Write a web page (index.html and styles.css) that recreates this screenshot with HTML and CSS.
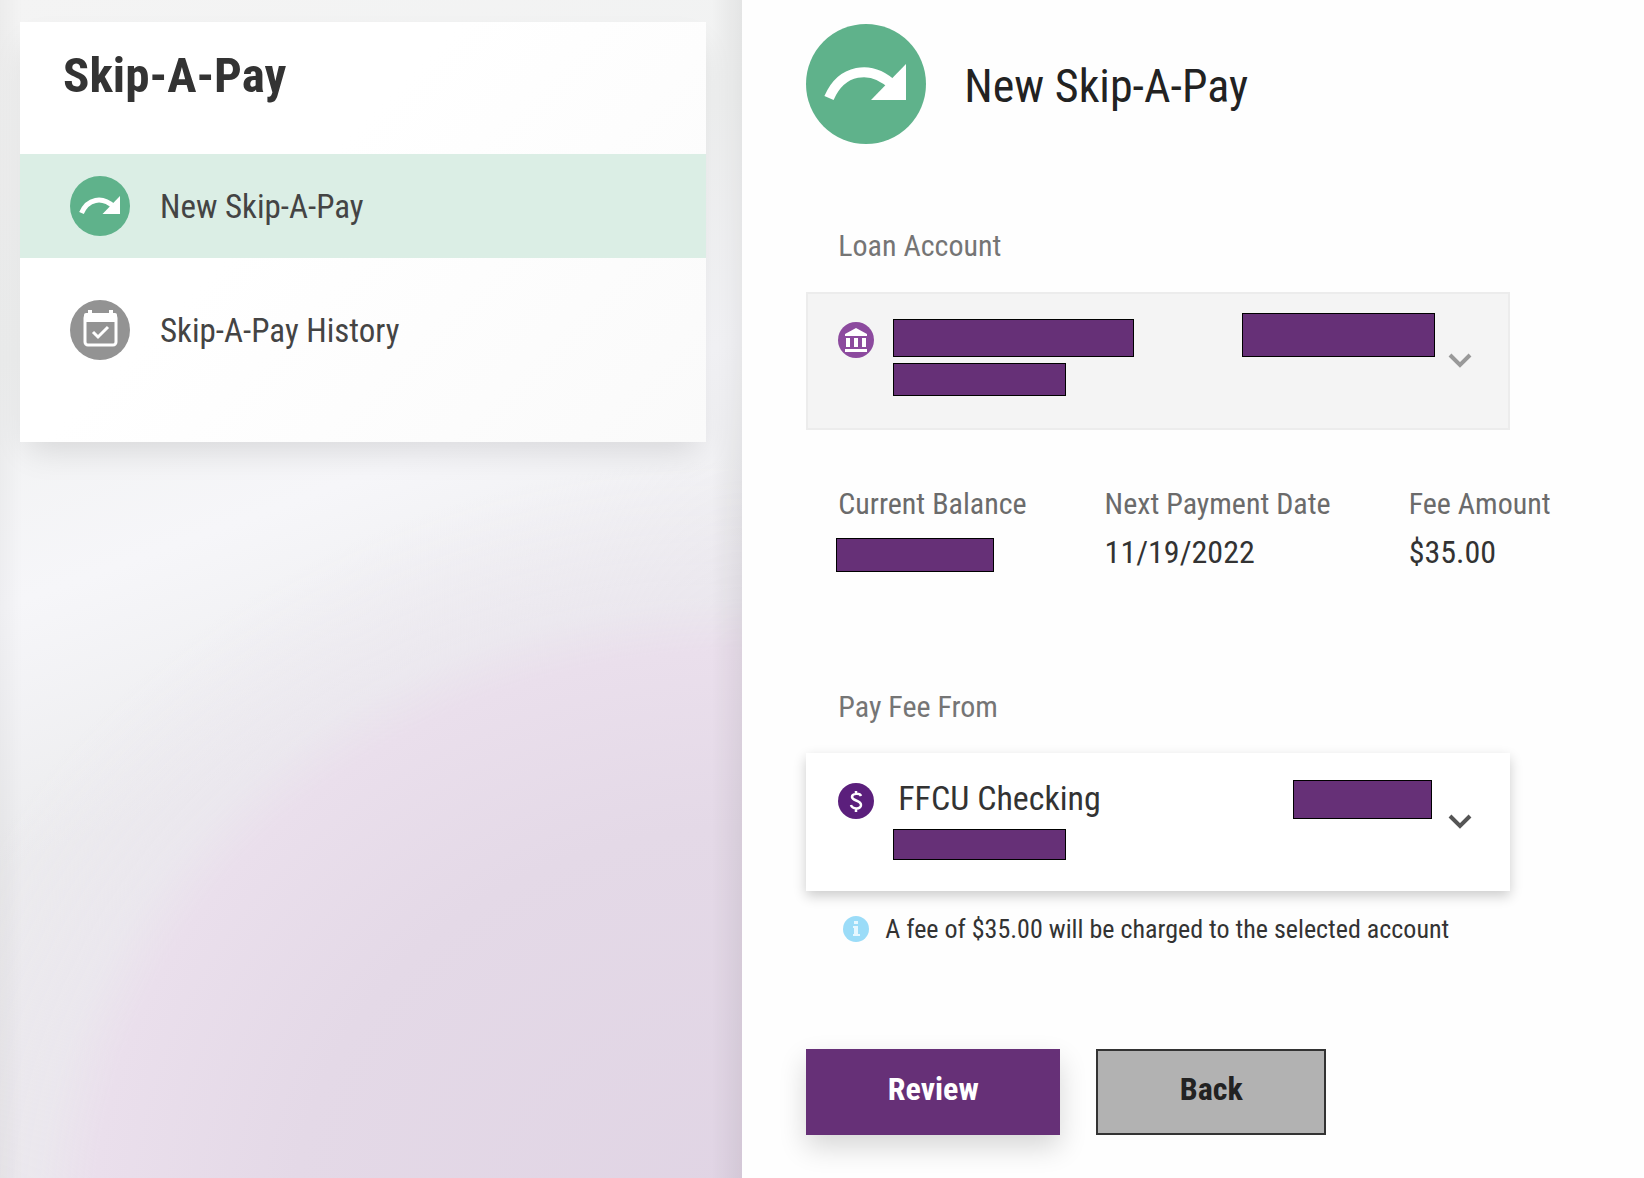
FILE: index.html
```html
<!DOCTYPE html>
<html lang="en">
<head>
  <meta charset="UTF-8" />
  <meta name="viewport" content="width=device-width, initial-scale=1.0"/>
  <title>Skip-A-Pay</title>
  <link rel="stylesheet" href="styles.css">
</head>
<body>
  <!-- shared icon shapes -->
  <svg width="0" height="0" class="icon-defs" aria-hidden="true">
    <symbol id="skip" viewBox="0 0 120 120">
      <circle cx="60" cy="60" r="60" fill="#5fb28b"/>
      <path d="M23 74C35 46 64 39 88 62" fill="none" stroke="#fff" stroke-width="10"/>
      <path d="M100 40V76H65Z" fill="#fff"/>
    </symbol>
    <symbol id="chevron" viewBox="0 0 24 16">
      <path d="M2 2L12 12L22 2" fill="none" stroke="currentColor" stroke-width="4"/>
    </symbol>
  </svg>

  <div class="page">
    <aside class="sidebar">
      <nav class="menu">
        <h1 class="menu-title">Skip-A-Pay</h1>
        <a href="#" class="menu-item active">
          <svg class="menu-icon" aria-hidden="true"><use href="#skip"/></svg>
          New Skip-A-Pay
        </a>
        <a href="#" class="menu-item">
          <svg class="menu-icon" viewBox="0 0 60 60" aria-hidden="true">
            <circle cx="30" cy="30" r="30" fill="#939393"/>
            <rect x="15" y="15" width="31" height="30" rx="3" fill="none" stroke="#fff" stroke-width="3"/>
            <path d="M14 15Q14 13 16 13H45Q47 13 47 15V22H14Z M18 10H22V14H18Z M39 10H43V14H39Z" fill="#fff"/>
            <path d="M23 32L28 37L38 27" fill="none" stroke="#fff" stroke-width="3"/>
          </svg>
          Skip-A-Pay History
        </a>
      </nav>
    </aside>

    <main class="content">
      <header class="content-header">
        <svg class="header-icon" aria-hidden="true"><use href="#skip"/></svg>
        <h2>New Skip-A-Pay</h2>
      </header>

      <form>
        <label class="field-label" for="loan">Loan Account</label>
        <div class="account account-loan">
          <select id="loan"><option></option></select>
          <div class="account-face">
            <svg class="account-icon" viewBox="0 0 36 36" aria-hidden="true">
              <circle cx="18" cy="18" r="18" fill="#8c4a9e"/>
              <path d="M18 6L29 12V14H7V12Z M8 16H12V25H8Z M16 16H20V25H16Z M24 16H28V25H24Z M7 27H29V30H7Z" fill="#fff"/>
            </svg>
            <div class="account-lines">
              <span class="bar bar-name"></span>
              <span class="bar bar-number"></span>
            </div>
            <span class="bar bar-balance"></span>
            <svg class="chevron" aria-hidden="true"><use href="#chevron"/></svg>
          </div>
        </div>

        <dl class="details">
          <div>
            <dt>Current Balance</dt>
            <dd><span class="bar bar-current"></span></dd>
          </div>
          <div>
            <dt>Next Payment Date</dt>
            <dd>11/19/2022</dd>
          </div>
          <div>
            <dt>Fee Amount</dt>
            <dd>$35.00</dd>
          </div>
        </dl>

        <label class="field-label" for="fee">Pay Fee From</label>
        <div class="account account-fee">
          <select id="fee"><option>FFCU Checking</option></select>
          <div class="account-face">
            <svg class="account-icon" viewBox="0 0 36 36" aria-hidden="true">
              <circle cx="18" cy="18" r="18" fill="#5b1f7c"/>
              <path d="M23 13C22 10 14 10 14 14C14 18 23 17 23 22C23 27 14 26 13 22M18 8V11M18 25V29" fill="none" stroke="#fff" stroke-width="2.5"/>
            </svg>
            <div class="account-lines">
              <span class="bar bar-number"></span>
            </div>
            <span class="bar bar-balance"></span>
            <svg class="chevron" aria-hidden="true"><use href="#chevron"/></svg>
          </div>
        </div>

        <p class="note">
          <svg class="note-icon" viewBox="0 0 26 26" aria-hidden="true">
            <circle cx="13" cy="13" r="13" fill="#9bdcf8"/>
            <path d="M11 5H15V8H11Z M10 10H15V18H17V20H10V18H11V12H10Z" fill="#e6f7ff"/>
          </svg>
          A fee of $35.00 will be charged to the selected account
        </p>

        <div class="actions">
          <button type="submit" class="btn btn-review">Review</button>
          <button type="button" class="btn btn-back">Back</button>
        </div>
      </form>
    </main>
  </div>
</body>
</html>
```
FILE: styles.css
```css
* {
  box-sizing: border-box;
}

body {
  margin: 0;
  background: #fefefe;
  color: #333;
  font-family: 'Roboto Condensed', Roboto, 'Liberation Sans', sans-serif;
}

.icon-defs {
  display: block;
}

.page {
  display: flex;
  min-height: 100vh;
}

/* sidebar */
.sidebar {
  flex: 0 0 45.15%;
  padding: 22px 36px 22px 20px;
  background:
    linear-gradient(to right, rgba(0,0,0,0.03), transparent 3%, transparent 96%, rgba(0,0,0,0.06)),
    radial-gradient(ellipse 93% 52% at 100% 104%, #e0d4e4 0%, #e4d9e7 65%, #eadfec 94%, rgba(234,228,238,0.6) 102%, rgba(234,228,238,0) 125%),
    linear-gradient(160deg, #f4f4f4 0%, #f1f2f2 25%, #f6f6f9 42%, #ececee 60%, #ececec 100%);
}

.menu {
  padding-bottom: 60px;
  background: linear-gradient(135deg, #fff 40%, #fafafa);
  box-shadow: 0 16px 32px -8px rgba(0,0,0,0.12);
}

.menu-title {
  margin: 0;
  padding: 26px 43px 50px;
  font-size: 49px;
  line-height: 56px;
}

.menu-item {
  display: flex;
  align-items: center;
  gap: 30px;
  height: 104px;
  margin-bottom: 20px;
  padding-left: 50px;
  color: #444;
  font-size: 33px;
  text-decoration: none;
}

.menu-item:last-child {
  margin-bottom: 0;
}

.menu-item.active {
  background: #dbeee5;
}

.menu-icon {
  width: 60px;
  height: 60px;
}

/* content */
.content {
  flex: 1;
  padding: 24px 64px 44px;
}

.content-header {
  display: flex;
  align-items: center;
  gap: 38px;
  margin-bottom: 84px;
}

.header-icon {
  width: 120px;
  height: 120px;
}

h2 {
  margin: 0;
  padding-top: 4px;
  color: #222;
  font-size: 46px;
  font-weight: normal;
}

.field-label {
  display: block;
  margin-left: 32px;
  color: #757575;
  font-size: 30px;
  line-height: 36px;
}

.account {
  display: grid;
  max-width: 704px;
  height: 138px;
}

.account select,
.account-face {
  grid-area: 1 / 1;
}

.account select {
  width: 100%;
  height: 100%;
  padding: 0 60px 48px 92px;
  appearance: none;
  border: none;
  background: none;
  color: #333;
  font: inherit;
  font-size: 34px;
}

.account-face {
  display: flex;
  align-items: flex-start;
  padding: 0 38px 0 32px;
  pointer-events: none;
}

.account-loan {
  margin: 28px 0 56px;
  background: #f4f4f4;
  box-shadow: inset 0 0 0 2px #ececec;
  color: #999;
}

.account-fee {
  margin: 28px 0 20px;
  background: #fff;
  box-shadow: 0 5px 12px rgba(0,0,0,0.2);
  color: #555;
}

.account-icon {
  width: 36px;
  height: 36px;
  margin: 30px 19px 0 0;
}

.account-lines {
  flex: 1;
}

.chevron {
  width: 24px;
  height: 16px;
  margin: 61px 0 0 13px;
}

/* masked values */
.bar {
  display: block;
  border: 1px solid #000;
  background: #663077;
}

.bar-name {
  width: 241px;
  height: 38px;
  margin: 27px 0 6px;
}

.bar-number {
  width: 173px;
  height: 33px;
}

.bar-balance {
  width: 193px;
  height: 44px;
  margin-top: 21px;
}

.account-fee .bar-number {
  height: 31px;
  margin-top: 76px;
}

.account-fee .bar-balance {
  width: 139px;
  height: 39px;
  margin: 27px 3px 0 0;
}

.bar-current {
  width: 158px;
  height: 34px;
  margin-left: -2px;
}

.details {
  display: flex;
  gap: 78px;
  margin: 0 0 117px 32px;
}

.details dt {
  color: #6b6b6b;
  font-size: 30px;
  line-height: 36px;
  margin-bottom: 16px;
}

.details dd {
  margin: 0;
  font-size: 32px;
  line-height: 28px;
}

.note {
  display: flex;
  align-items: center;
  gap: 16px;
  margin: 0 0 102px 37px;
  font-size: 26px;
  line-height: 36px;
}

.note-icon {
  width: 26px;
  height: 26px;
}

.actions {
  display: flex;
  gap: 36px;
}

.btn {
  height: 86px;
  padding-bottom: 8px;
  border: none;
  font: inherit;
  font-size: 32px;
  font-weight: bold;
  cursor: pointer;
}

.btn-review {
  width: 254px;
  background: #663077;
  color: #fff;
  box-shadow: 0 12px 28px rgba(0,0,0,0.16);
}

.btn-back {
  width: 230px;
  border: 2px solid #333;
  background: #b2b2b2;
  color: #222;
}
```
